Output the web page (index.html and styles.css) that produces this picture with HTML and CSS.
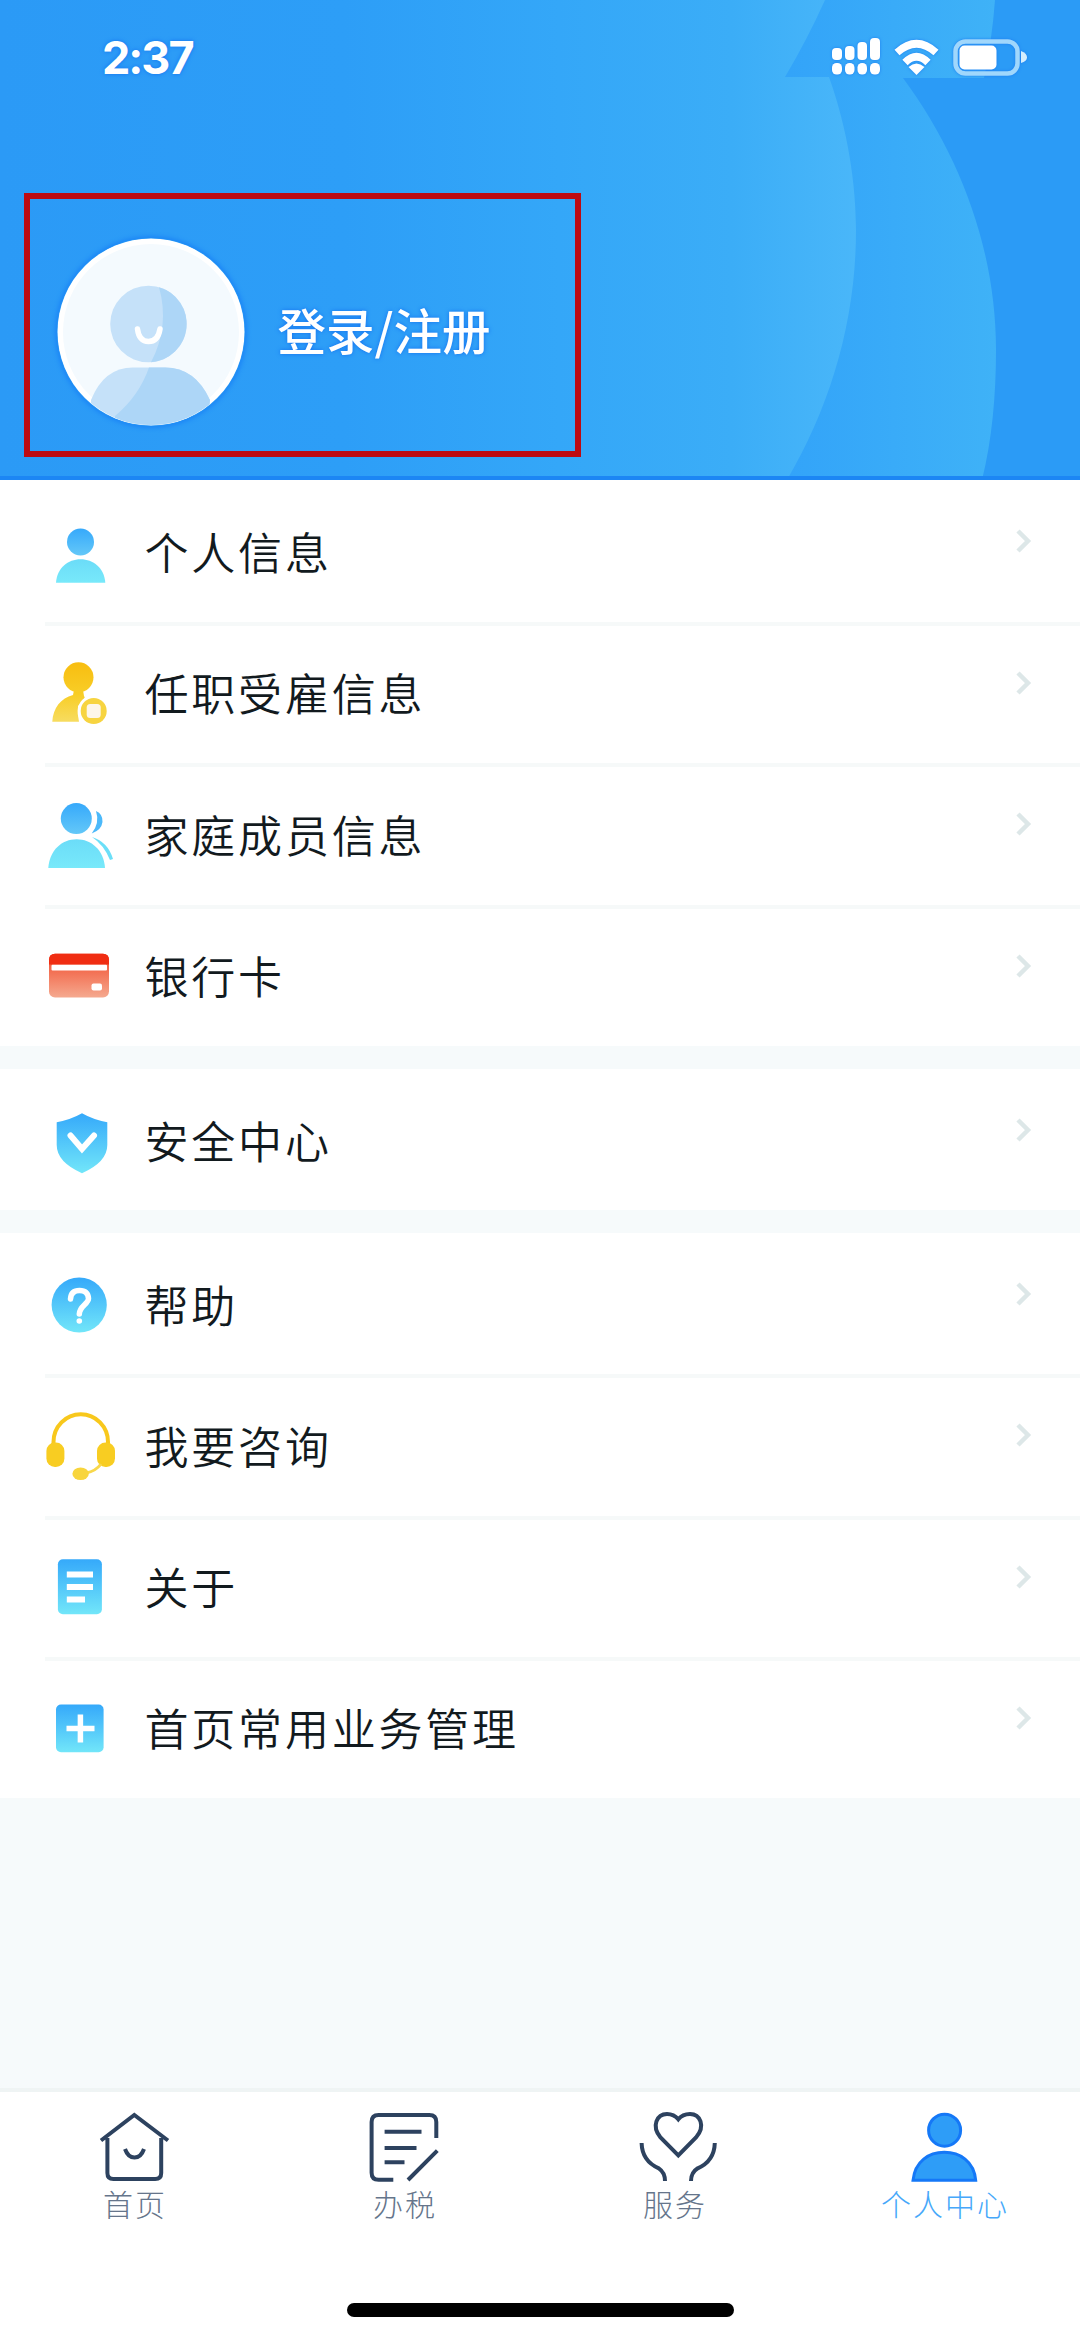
FILE: index.html
```html
<!DOCTYPE html>
<html lang="zh-CN">
<head>
<meta charset="utf-8">
<title>个人中心</title>
<link rel="stylesheet" href="styles.css">
</head>
<body>
<svg class="defs" width="0" height="0" aria-hidden="true">
  <defs>
    <linearGradient id="blue" x1="0" y1="0" x2="0" y2="1"><stop offset="0" stop-color="#35a9fa"/><stop offset="1" stop-color="#72e6f9"/></linearGradient>
    <linearGradient id="blueHead" x1="0" y1="0" x2="0" y2="1"><stop offset="0" stop-color="#36a9fb"/><stop offset="1" stop-color="#64c8f8"/></linearGradient>
    <linearGradient id="blueBody" x1="0" y1="0" x2="0" y2="1"><stop offset="0" stop-color="#6bdcf8"/><stop offset="1" stop-color="#78e9fa"/></linearGradient>
    <linearGradient id="gold" x1="0" y1="0" x2="0" y2="1"><stop offset="0" stop-color="#f8bd10"/><stop offset="1" stop-color="#f8cd26"/></linearGradient>
    <linearGradient id="goldBody" x1="0" y1="0" x2="0" y2="1"><stop offset="0" stop-color="#f8cb1c"/><stop offset="1" stop-color="#f7dc60"/></linearGradient>
    <linearGradient id="card" x1="0" y1="0" x2="0" y2="1"><stop offset="0" stop-color="#f1492a"/><stop offset="1" stop-color="#f5a98f"/></linearGradient>
    <linearGradient id="left" gradientUnits="userSpaceOnUse" x1="0" y1="0" x2="860" y2="0"><stop offset="0" stop-color="#2b9af6"/><stop offset=".4" stop-color="#2d9ef7"/><stop offset=".65" stop-color="#34a7f8"/><stop offset=".85" stop-color="#3badf7"/><stop offset="1" stop-color="#4ab7f9"/></linearGradient>
    <linearGradient id="middle" gradientUnits="userSpaceOnUse" x1="790" y1="0" x2="996" y2="0"><stop offset="0" stop-color="#33a4f9"/><stop offset="1" stop-color="#3fb2f7"/></linearGradient>
    <clipPath id="avatarClip"><circle cx="94" cy="94" r="93"/></clipPath>
    <symbol id="chevron" viewBox="0 0 20 28"><path d="M4 4L14 14L4 24" fill="none" stroke="#dde7e8" stroke-width="4.5"/></symbol>
  </defs>
</svg>

<div class="screen">
  <header class="hero">
    <svg class="hero-art" viewBox="0 0 1080 480" aria-hidden="true">
      <path fill="url(#middle)" d="M780 0H995Q992 40 984 78H903C960 155 996 250 996 350C996 395 992 440 982 480H780Z"/>
      <path fill="url(#left)" d="M0 0H825Q807 40 785 77H829C848 130 856 185 856 230C856 320 831 405 787 480H0Z"/>
      <rect y="476" width="1080" height="4" fill="#1c86f4"/>
    </svg>
    <div class="status">
      <span class="time">2:37</span>
      <svg class="status-icons" width="200" height="44" viewBox="830 36 200 44" fill="#fff">
        <rect x="832" y="48" width="10" height="12" rx="4"/><rect x="845" y="46" width="9.5" height="14" rx="4"/><rect x="857.5" y="42" width="9.5" height="18" rx="4"/><rect x="870" y="38" width="10" height="22" rx="4"/>
        <rect x="832" y="63" width="10" height="11.500" rx="4.500"/><rect x="845" y="63" width="9.500" height="11.500" rx="4.500"/><rect x="857.500" y="63" width="9.500" height="11.500" rx="4.500"/><rect x="870" y="63" width="10" height="11.500" rx="4.500"/>
        <path d="M897 52.500Q916.500 35 936 52.500M905 62.500Q916.500 51 928 62.500" fill="none" stroke="#fff" stroke-width="7.500"/>
        <path d="M908.500 67Q916.500 60 924.500 67L916.500 75Z"/>
        <rect x="955.500" y="41.500" width="62" height="32" rx="10" fill="none" stroke="#a0d7fc" stroke-width="4.500"/>
        <rect x="959.500" y="45.500" width="37" height="24" rx="5"/>
        <path d="M1021 51Q1027 53 1027 57.500Q1027 61 1021 63Z" fill="#d5eefd"/>
      </svg>
    </div>
    <div class="login">
      <svg class="avatar" width="188" height="188" viewBox="0 0 188 188">
        <circle cx="94" cy="94" r="93.500" fill="#fff"/>
        <circle cx="94" cy="94" r="88" fill="#f4fafe"/>
        <g clip-path="url(#avatarClip)">
          <circle cx="91.500" cy="86" r="38.300" fill="#c5e1f9"/>
          <path d="M102 49.200A38.300 38.300 0 0 1 94 124.200Q113 88 102 49.200Z" fill="#add6f7"/>
          <path d="M34 162Q47 129.500 76 129.500H108Q138 129.500 153 162L150 190H34Z" fill="#c5e1f9"/>
          <path d="M92 129.500H108Q138 129.500 153 162L150 190H58V178Q82 158 92 129.500Z" fill="#add6f7"/>
        </g>
        <path d="M80.500 91Q82 103.500 91.500 103.500Q101 103.500 103 91" fill="none" stroke="#fff" stroke-width="5.500" stroke-linecap="round"/>
      </svg>
      <span class="login-text">登录/注册</span>
    </div>
  </header>

  <main class="menu">
    <section class="group">
      <a class="row">
        <svg class="icon" viewBox="0 0 80 80"><circle cx="40.500" cy="31" r="13.500" fill="url(#blueHead)"/><path d="M16 71.700C17 57 28 48.300 40.600 48.300S64.300 57 65.300 71.700Z" fill="url(#blueBody)"/></svg>
        <span class="label">个人信息</span><svg class="chevron"><use href="#chevron"/></svg>
      </a>
      <a class="row">
        <svg class="icon" viewBox="0 0 80 80"><path d="M12.300 69.700C13 56 21 46 33 43L34 38H43L44 44Q47 46 38 54Q37 62 39 69.700Z" fill="url(#goldBody)"/><circle cx="38.500" cy="25.300" r="15" fill="url(#gold)"/><circle cx="53.700" cy="59" r="16" fill="#fff"/><circle cx="53.700" cy="59" r="13" fill="#f7d440"/><rect x="46.700" y="52" width="14" height="14" rx="3.500" fill="#fdf6e8"/></svg>
        <span class="label">任职受雇信息</span><svg class="chevron"><use href="#chevron"/></svg>
      </a>
      <a class="row">
        <svg class="icon" viewBox="0 0 80 80"><circle cx="36.300" cy="24.600" r="15.500" fill="url(#blueHead)"/><path d="M8.300 74C9.500 56 22 45.200 36.600 45.200S64 56 65 74Z" fill="url(#blueBody)"/><path d="M56 17Q63 20 62.500 28Q61.500 36 51.700 39.500Q60 29 56 17Z" fill="#4cb9fa"/><path d="M52 43Q68 48 73 65L70 66Q64 51 52 43Z" fill="#6bdff8"/></svg>
        <span class="label">家庭成员信息</span><svg class="chevron"><use href="#chevron"/></svg>
      </a>
      <a class="row">
        <svg class="icon" viewBox="0 0 80 80"><rect x="9" y="18.700" width="60" height="43.700" rx="6" fill="url(#card)"/><path d="M9 29.500V24.700Q9 18.700 15 18.700H63Q69 18.700 69 24.700V29.500Z" fill="#f02d12"/><rect x="11.500" y="29.700" width="55.500" height="5.700" rx="1" fill="#fff"/><rect x="51.500" y="48.500" width="10.500" height="7" rx="2" fill="#fff"/></svg>
        <span class="label">银行卡</span><svg class="chevron"><use href="#chevron"/></svg>
      </a>
    </section>

    <section class="group group-security">
      <a class="row">
        <svg class="icon" viewBox="0 0 80 80"><path d="M42 13.200Q53 19.500 67.300 22.200V45Q67.300 62 42 73.200Q16.700 62 16.700 45V22.200Q31 19.500 42 13.200Z" fill="url(#blue)"/><path d="M30.500 35.500L42 49L54 35.500" fill="none" stroke="#fff" stroke-width="6" stroke-linecap="round"/></svg>
        <span class="label">安全中心</span><svg class="chevron"><use href="#chevron"/></svg>
      </a>
    </section>

    <section class="group group-support">
      <a class="row">
        <svg class="icon" viewBox="0 0 80 80"><circle cx="39.200" cy="41" r="27.600" fill="url(#blue)"/><path d="M30.500 35Q31 26.500 39.500 26.500T48.500 34.500C48.500 40 39.300 42 39.300 50" fill="none" stroke="#fff" stroke-width="5.500" stroke-linecap="round"/><circle cx="39.300" cy="57" r="2.800" fill="#fff"/></svg>
        <span class="label">帮助</span><svg class="chevron"><use href="#chevron"/></svg>
      </a>
      <a class="row">
        <svg class="icon" viewBox="0 0 80 80"><path d="M13.500 42V37A27 27.500 0 0 1 68 37V42" fill="none" stroke="#f8c81c" stroke-width="4"/><rect x="6.400" y="37.400" width="18" height="24.500" rx="8.500" fill="#f8cd22"/><rect x="57" y="37.400" width="18" height="24.500" rx="8.500" fill="#f8cd22"/><path d="M46 68Q56 66 61 59" fill="none" stroke="#f8d84c" stroke-width="3"/><ellipse cx="40.600" cy="68.700" rx="8.200" ry="6.300" fill="#f8d53c"/></svg>
        <span class="label">我要咨询</span><svg class="chevron"><use href="#chevron"/></svg>
      </a>
      <a class="row">
        <svg class="icon" viewBox="0 0 80 80"><rect x="17.900" y="13.200" width="44" height="55" rx="5" fill="url(#blue)"/><path d="M26.800 28.600H53M26.800 41.100H53M26.800 53.400H45" stroke="#fff" stroke-width="6"/></svg>
        <span class="label">关于</span><svg class="chevron"><use href="#chevron"/></svg>
      </a>
      <a class="row">
        <svg class="icon" viewBox="0 0 80 80"><rect x="16" y="17.600" width="47.600" height="47.700" rx="5" fill="url(#blue)"/><path d="M26.500 41.600H54.500M40.400 27.600V55.600" stroke="#fff" stroke-width="5.500"/></svg>
        <span class="label">首页常用业务管理</span><svg class="chevron"><use href="#chevron"/></svg>
      </a>
    </section>
  </main>

  <nav class="tabs">
    <a class="tab">
      <svg class="tab-icon" viewBox="0 0 84 76"><path d="M8 32.500L41.300 7L75 32.500M14.400 30V65Q14.400 71 20.400 71H62.200Q68.200 71 68.200 65V30M32 41Q35 49.500 41.500 49.500T51 41"/></svg>
      <span>首页</span>
    </a>
    <a class="tab">
      <svg class="tab-icon" viewBox="0 0 84 76"><path d="M73.300 30V14Q73.300 7 66.300 7H15.600Q8.600 7 8.600 14V64.700Q8.600 71.700 15.600 71.700H30.300M74.300 42.700L45 72M21.600 23.700H58.500M21.600 40H53.500M21.600 54.300H41.500"/></svg>
      <span>办税</span>
    </a>
    <a class="tab">
      <svg class="tab-icon" viewBox="0 0 84 76"><path d="M45.300 47.300L27.500 29.500C18 18 24 6 34 6Q41 6 45.300 11.300Q49.500 6 57 6C67 6 73 18 63 29.500ZM8.600 35C9 50 17 56.500 25.800 60.300Q32 64.500 32 73M81.800 35C81.400 50 73.500 56.500 64.700 60.300Q58 64.500 58 73"/></svg>
      <span>服务</span>
    </a>
    <a class="tab tab-active">
      <svg class="tab-icon" viewBox="0 0 84 76"><circle cx="41.600" cy="22.200" r="16"/><path d="M10 72.300C12 53 26 44.300 41.300 44.300S71 53 72.700 72.300Z"/></svg>
      <span>个人中心</span>
    </a>
  </nav>
  <div class="home-bar"></div>
</div>
</body>
</html>
```
FILE: styles.css
```css
* { box-sizing: border-box; }

body {
  margin: 0;
  font-family: "Noto Sans CJK SC", sans-serif;
  background: #f6fafb;
}

.defs { position: absolute; }

.screen {
  display: flex;
  flex-direction: column;
  width: 1080px;
  height: 2341px;
  overflow: hidden;
}

/* Header */
.hero {
  position: relative;
  flex: none;
  height: 480px;
  background: #2b9bf6;
}

.hero-art {
  position: absolute;
  top: 0;
  left: 0;
  width: 1080px;
  height: 480px;
}

.status {
  position: relative;
  display: flex;
  justify-content: space-between;
  height: 193px;
  padding: 36px 50px 0 102px;
}

.time {
  color: #fff;
  font: bold 45px/44px Inter, sans-serif;
  letter-spacing: -2px;
  text-shadow: 0 0 4px #1470f0;
}

.status-icons { filter: drop-shadow(0 0 1.5px #1d7df2); }

.login {
  position: relative;
  display: flex;
  align-items: center;
  width: 557px;
  height: 264px;
  margin-left: 23.5px;
  padding: 13px 0 0 27px;
  border: 6px solid #bd0a12;
}

.avatar {
  border-radius: 50%;
  box-shadow: 0 0 4px 2px #1c86f6;
}

.login-text {
  margin: -6px 0 0 33px;
  color: #fff;
  font-size: 48.5px;
  font-weight: 500;
  line-height: 60px;
  text-shadow: 0 0 4px #1470f0;
}

/* Menu */
.menu {
  flex: 1;
  display: flex;
  flex-direction: column;
  gap: 23px;
}

.group {
  --row: 141.5px;
  background: #fff;
}

.group-security { --row: 141px; }
.group-support { --row: 141.25px; }

.row {
  display: flex;
  align-items: center;
  height: var(--row);
  padding: 0 46.5px 0 40px;
}

.row + .row {
  background: linear-gradient(#f6f9f9, #f6f9f9) 45px 0 / 1035px 4px no-repeat;
}

.icon {
  flex: none;
  width: 80px;
  height: 80px;
}

.label {
  flex: 1;
  margin: 0 0 0 24.5px;
  color: #121a1e;
  font-size: 44px;
  font-weight: 350;
  line-height: 60px;
  letter-spacing: 2.8px;
}

.chevron {
  width: 20px;
  height: 28px;
  margin-bottom: 19px;
}

/* Bottom navigation */
.tabs {
  display: grid;
  grid-template-columns: repeat(4, 1fr);
  flex: none;
  height: 215px;
  padding-top: 16px;
  background: #fff;
  border-top: 4px solid #eff4f4;
}

.tab {
  display: flex;
  flex-direction: column;
  align-items: center;
  color: #65758b;
  font-size: 30px;
  font-weight: 300;
  line-height: 38px;
  letter-spacing: 2px;
}

.tab-icon {
  width: 84px;
  height: 76px;
  overflow: visible;
  fill: none;
  stroke: #2d425f;
  stroke-width: 4;
}

.tab-active { color: #46a8fa; }

.tab-active .tab-icon {
  fill: #2e9df7;
  stroke: #1578f7;
  stroke-width: 3;
}

.home-bar {
  flex: none;
  height: 38px;
  background: #fff;
}

.home-bar::before {
  content: "";
  display: block;
  width: 387px;
  height: 14px;
  margin: 0 auto;
  border-radius: 7px;
  background: #000;
}
```
